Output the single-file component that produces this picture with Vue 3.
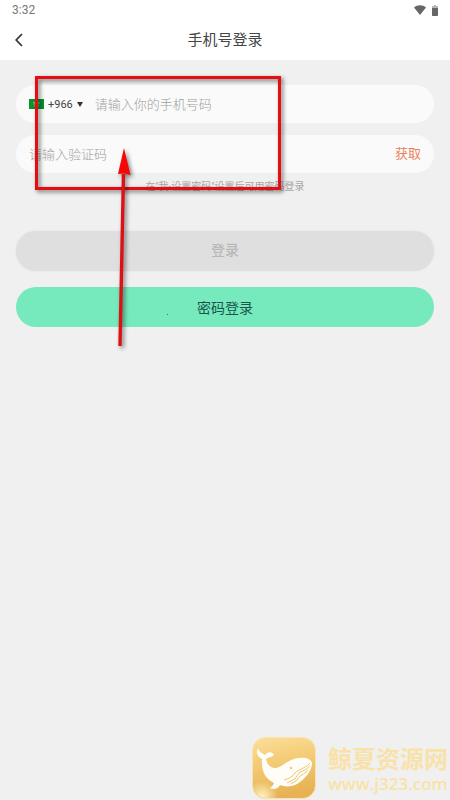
<template>
  <div class="page">
    <header class="top">
      <div class="status">
        <span>{{ time }}</span>
        <div class="status-icons">
          <svg width="12" height="10" viewBox="0 0 12 10">
            <path d="M0 2.6C3.2-.4 8.8-.4 12 2.6L6 10z" fill="#666" />
          </svg>
          <svg width="6" height="11" viewBox="0 0 6 11">
            <path d="M2 0h2v1h2v2H0V1h2z" fill="#b5b5b5" />
            <path d="M0 3h6v7.3q0 .7-.7.7H.7Q0 11 0 10.3z" fill="#666" />
          </svg>
        </div>
      </div>
      <nav class="nav">
        <button class="back" type="button" aria-label="返回">
          <svg width="8" height="14" viewBox="0 0 8 14">
            <path d="M7 1L1.2 7L7 13" fill="none" stroke="#333" stroke-width="1.7" />
          </svg>
        </button>
        <h1>手机号登录</h1>
      </nav>
    </header>

    <form class="form" @submit.prevent>
      <div class="field">
        <button class="area" type="button" aria-label="国家代码">
          <svg class="flag" width="15" height="10" viewBox="0 0 15 10">
            <rect width="15" height="10" fill="#07942f" />
            <path d="M4 3h1v1h1V3h1v1h1V3h1v1h2M4 5h3M8 5h2M5 7h5" fill="none" stroke="#9dd0aa" stroke-width=".7" />
          </svg>
          <span>+966</span>
          <svg width="6" height="5" viewBox="0 0 6 5">
            <path d="M0 0h6L3 5z" fill="#333" />
          </svg>
        </button>
        <input v-model="phone" type="tel" aria-label="手机号码" placeholder="请输入你的手机号码" />
      </div>
      <div class="field">
        <input v-model="code" type="text" aria-label="验证码" placeholder="请输入验证码" />
        <button class="get-code" type="button">获取</button>
      </div>
      <p class="hint">在"我-设置密码"设置后可用密码登录</p>
      <button class="btn login" type="submit" :disabled="!phone || !code">登录</button>
      <button class="btn password" type="button">密码登录</button>
    </form>

    <!-- tutorial marks -->
    <div class="mark-box"></div>
    <svg class="mark-arrow" width="24" height="206" viewBox="0 0 24 206">
      <path d="M11.5 26L8 198" fill="none" stroke="#de1015" stroke-width="3.4" />
      <path d="M12 0L18.5 27L12 25.5L6 26z" fill="#fa0505" />
    </svg>
    <i class="mark-dot"></i>

    <div class="brand">
      <svg width="64" height="62" viewBox="0 0 64 62">
        <defs>
          <linearGradient id="gold" x1="0" y1="0" x2="0.2" y2="1">
            <stop offset="0" stop-color="#fbdf9c" />
            <stop offset=".4" stop-color="#f5cd79" />
            <stop offset="1" stop-color="#e7b254" />
          </linearGradient>
          <radialGradient id="shine" cx=".15" cy=".97" r=".25">
            <stop offset="0" stop-color="#fff3c4" />
            <stop offset="1" stop-color="#fff3c4" stop-opacity="0" />
          </radialGradient>
        </defs>
        <rect x=".5" y=".5" width="63" height="61" rx="13" fill="url(#gold)" stroke="#fbe3b0" />
        <rect x="1" y="1" width="62" height="60" rx="13" fill="url(#shine)" />
        <path d="M6 11C7 15 10 16 13 18C15 15 20 14 22 18C20 20 17 20 14 22C15 28 19 31 24 31C32 29 36 22 47 21C54 20 59 22 60 26C60 34 53 42 45 47C40 50 33 50 28 48C26 52 22 53 18 51C20 50 21 48 22 46C14 42 9 35 10 22C5 19 4 16 6 11z" fill="#fffdf8" />
        <g fill="none" stroke="#f0c672" stroke-width="1">
          <path d="M58 26C53 32 46 32 43 36Q40 41 32 43" />
          <path d="M58 29Q53 34 48 35Q45 38 43 42L35 46" />
          <path d="M56 33Q51 38 48 39L44 44L39 47" />
        </g>
        <circle cx="39" cy="31" r="1.2" fill="#f0c672" />
      </svg>
      <div class="brand-text">
        <strong>鲸夏资源网</strong>
        <span>www.j323.com</span>
      </div>
    </div>
  </div>
</template>

<script setup>
import { ref } from 'vue';

const time = ref('3:32');
const phone = ref('');
const code = ref('');
</script>

<style>
body {
  margin: 0;
  background: #f0f0f0;
}
</style>

<style scoped>
.page {
  position: relative;
  min-height: 100vh;
  overflow: hidden;
  background: #f0f0f0;
  font-family: Roboto, "Noto Sans CJK SC", sans-serif;
  color: #444;
}

button,
input {
  padding: 0;
  border: 0;
  background: none;
  font-family: inherit;
  color: inherit;
}

.top {
  background: #fff;
}

.status {
  display: flex;
  align-items: center;
  justify-content: space-between;
  height: 20px;
  padding: 0 12px;
  font-size: 12px;
  color: #777;
}

.status-icons {
  display: flex;
  align-items: center;
  gap: 6px;
}

.nav {
  display: grid;
  grid-template-columns: 40px 1fr 40px;
  align-items: center;
  height: 40px;
}

.back {
  display: flex;
  padding-left: 15px;
}

.nav h1 {
  margin: 0;
  font-size: 15px;
  font-weight: 400;
  line-height: 24px;
  text-align: center;
}

/* form */
.form {
  display: flex;
  flex-direction: column;
  padding: 25px 16px 0;
}

.field {
  display: flex;
  align-items: center;
  height: 38px;
  margin-bottom: 12px;
  padding: 0 13px;
  border-radius: 19px;
  background: #fafafa;
}

.area {
  display: flex;
  align-items: center;
  gap: 4px;
  margin-right: 12px;
  font-size: 11px;
}

.field input {
  flex: 1;
  min-width: 0;
  height: 24px;
  outline: none;
  font-size: 13px;
  font-weight: 300;
}

.field input::placeholder {
  color: #a0a0a0;
}

.get-code {
  font-size: 13px;
  line-height: 16px;
  color: #e8835f;
}

.hint {
  margin: -6px 0 36px;
  font-size: 10px;
  line-height: 16px;
  text-align: center;
  color: #a8a8a8;
}

.btn {
  height: 40px;
  border-radius: 20px;
  font-size: 14px;
}

.login {
  margin-bottom: 16px;
  padding-bottom: 4px;
  background: #dfdfdf;
  box-shadow: 0 0 2px #dfdfdf;
  font-weight: 500;
  color: #b8b8b8;
}

.password {
  background: #76e9bd;
  color: #17564c;
}

.mark-box {
  position: absolute;
  top: 76px;
  left: 35px;
  box-sizing: border-box;
  width: 246px;
  height: 114px;
  border: 3px solid #e60c12;
  filter: drop-shadow(2px 2px 2px rgba(0, 0, 0, 0.55));
  pointer-events: none;
}

.mark-arrow {
  position: absolute;
  top: 148px;
  left: 112px;
  overflow: visible;
  filter: drop-shadow(2px 2px 2px rgba(0, 0, 0, 0.5));
  pointer-events: none;
}

.mark-dot {
  position: absolute;
  top: 314px;
  left: 167px;
  width: 1px;
  height: 1px;
  background: #2f7d68;
}

/* site watermark */
.brand {
  position: absolute;
  right: 2px;
  bottom: 1px;
  display: flex;
  align-items: center;
  gap: 12px;
}

.brand-text {
  display: flex;
  flex-direction: column;
  padding-top: 6px;
  color: #f9e2a8;
}

.brand-text strong {
  font-size: 24px;
  font-weight: 700;
  line-height: 26px;
}

.brand-text span {
  font-family: "Open Sans", sans-serif;
  font-size: 17px;
  font-weight: 600;
  line-height: 22px;
}
</style>
